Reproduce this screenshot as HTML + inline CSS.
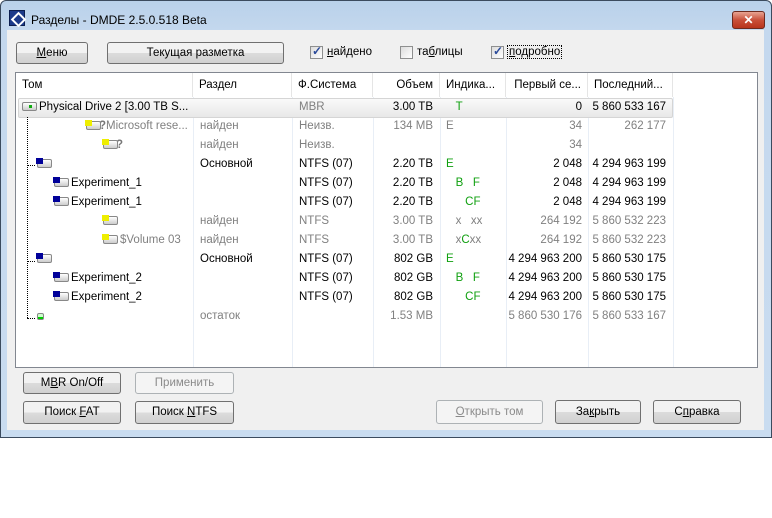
<!DOCTYPE html>
<html><head><meta charset="utf-8"><style>
*{margin:0;padding:0;box-sizing:border-box}
body{width:772px;height:518px;background:#fff;font-family:"Liberation Sans",sans-serif;font-size:11.5px;position:relative;overflow:hidden}
.win{position:absolute;left:0;top:0;width:772px;height:438px;background:linear-gradient(#b9d1ea,#c4d8ee 30px,#c9dcf0);border:1px solid #3b4b5e;border-radius:6px 6px 0 0}
.title{position:absolute;left:30px;top:12px;font-size:12px;color:#000}
.logo{position:absolute;left:8px;top:9px;width:16px;height:16px;background:#1c3a8a;border:1px solid #0c1e50}
.logo:after{content:"";position:absolute;left:3px;top:3px;width:7px;height:7px;border:2px solid #fff;transform:rotate(45deg)}
.close{position:absolute;left:731px;top:10px;width:33px;height:18px;border-radius:3px;background:linear-gradient(#e8a493,#c9503a 50%,#b8341c);border:1px solid #6d2a1e;color:#fff;font-weight:bold;text-align:center;font-size:12px;line-height:16px}
.client{position:absolute;left:7px;top:30px;width:757px;height:400px;background:#f0f0f0}
.a{position:absolute;white-space:nowrap}
.btn{position:absolute;border:1px solid #707070;border-radius:3px;background:linear-gradient(#f2f2f2 50%,#dcdcdc 50%,#d0d0d0);text-align:center;line-height:20px;color:#000}
.btn.dis{border-color:#adb2b5;background:#f4f4f4;color:#8a8a8a}
.cb{position:absolute;width:13px;height:13px;border:1px solid #8e8f8f;background:linear-gradient(135deg,#dcdcdc,#fff)}
.cb.on:after{content:"✓";position:absolute;left:1px;top:-3px;color:#2a4a9a;font-weight:bold;font-size:12px}
.list{position:absolute;left:15px;top:72px;width:743px;height:296px;background:#fff;border:1px solid #828790}
.hdr{position:absolute;top:0;height:24px;line-height:25px;border-right:1px solid #e5e5e5;padding:0 6px;color:#000;white-space:nowrap}
.vl{position:absolute;top:24px;bottom:0;width:1px;background:#e8eef6}
.t{position:absolute;height:19px;line-height:19px;white-space:nowrap}
.g{color:#808080}.gr{color:#10a010}
.r{text-align:right}
.ic{display:inline-block;width:15px;height:9px;border:1px solid #888;border-radius:2px;background:linear-gradient(#fff,#ccc);vertical-align:-1px;position:relative;margin-right:2px}
.ic i{position:absolute;left:-2px;top:-2px;width:7px;height:6px}
</style></head><body>
<div class="win">
<div class="logo"></div><div class="title">Разделы - DMDE 2.5.0.518 Beta</div>
<div class="close">✕</div>
</div>
<div class="client"></div>
<div class="btn" style="left:16px;top:42px;width:72px;height:22px"><u>М</u>еню</div>
<div class="btn" style="left:107px;top:42px;width:177px;height:22px">Текущая разметка</div>
<div class="cb on" style="left:310px;top:46px"></div><div class="a" style="left:327px;top:46px"><u>н</u>айдено</div>
<div class="cb" style="left:400px;top:46px"></div><div class="a" style="left:417px;top:46px">та<u>б</u>лицы</div>
<div class="cb on" style="left:491px;top:46px"></div><div class="a" style="left:507px;top:45px;border:1px dotted #000;padding:0 1px"><u>п</u>одробно</div>
<div class="list">
<div class="hdr" style="left:0;width:177px">Том</div>
<div class="hdr" style="left:177px;width:99px">Раздел</div>
<div class="hdr" style="left:276px;width:81px">Ф.Система</div>
<div class="hdr r" style="left:357px;width:67px">Объем</div>
<div class="hdr" style="left:424px;width:66px">Индика...</div>
<div class="hdr r" style="left:490px;width:82px">Первый се...</div>
<div class="hdr" style="left:572px;width:85px">Последний...</div>
<div class="vl" style="left:177px"></div><div class="vl" style="left:276px"></div><div class="vl" style="left:357px"></div><div class="vl" style="left:424px"></div><div class="vl" style="left:490px"></div><div class="vl" style="left:572px"></div><div class="vl" style="left:657px"></div>
<div style="position:absolute;left:2px;top:25px;width:655px;height:20px;border:1px solid #d5d5d5;border-radius:2px;background:linear-gradient(#fafafa,#e8e8e8)"></div>
<div style="position:absolute;left:11px;top:44px;height:201px;border-left:1px dotted #000"></div>
<div style="position:absolute;left:11px;top:92px;width:8px;border-top:1px dotted #000"></div>
<div style="position:absolute;left:11px;top:188px;width:8px;border-top:1px dotted #000"></div>
<div style="position:absolute;left:11px;top:245px;width:8px;border-top:1px dotted #000"></div>
</div>
<div id="rows"></div>
<script>
var rows=[
[22,'','Physical Drive 2 [3.00 TB S...','','MBR','3.00 TB','&nbsp;&nbsp;&nbsp;T','0','5 860 533 167','x',1],
[86,'#ee0','Microsoft rese...','найден','Неизв.','134 MB','E','34','262 177','q',0],
[103,'#ee0','','найден','Неизв.','','','34','','q',0],
[37,'#009','','Основной','NTFS (07)','2.20 TB','<span class=gr>E</span>','2 048','4 294 963 199','',1],
[54,'#009','Experiment_1','','NTFS (07)','2.20 TB','<span class=gr>&nbsp;&nbsp;&nbsp;B&nbsp;&nbsp;&nbsp;F</span>','2 048','4 294 963 199','',1],
[54,'#009','Experiment_1','','NTFS (07)','2.20 TB','<span class=gr>&nbsp;&nbsp;&nbsp;&nbsp;&nbsp;&nbsp;CF</span>','2 048','4 294 963 199','',1],
[103,'#ee0','','найден','NTFS','3.00 TB','&nbsp;&nbsp;&nbsp;x&nbsp;&nbsp;&nbsp;xx','264 192','5 860 532 223','',0],
[103,'#ee0','$Volume 03','найден','NTFS','3.00 TB','&nbsp;&nbsp;&nbsp;x<span class=gr>C</span>xx','264 192','5 860 532 223','',0],
[37,'#009','','Основной','NTFS (07)','802 GB','<span class=gr>E</span>','4 294 963 200','5 860 530 175','',1],
[54,'#009','Experiment_2','','NTFS (07)','802 GB','<span class=gr>&nbsp;&nbsp;&nbsp;B&nbsp;&nbsp;&nbsp;F</span>','4 294 963 200','5 860 530 175','',1],
[54,'#009','Experiment_2','','NTFS (07)','802 GB','<span class=gr>&nbsp;&nbsp;&nbsp;&nbsp;&nbsp;&nbsp;CF</span>','4 294 963 200','5 860 530 175','',1],
[37,'g','','остаток','','1.53 MB','','5 860 530 176','5 860 533 167','',0]];
var h='';
rows.forEach(function(r,i){var y=98+i*19;var c=r[10]?'':' g';
var ic;
if(r[9]=='x')ic='<span class=ic style="width:15px"><i style="left:6px;top:2px;width:3px;height:3px;background:#1a1"></i></span>';
else if(r[1]=='g')ic='<span class=ic style="width:7px;height:7px;background:#cfc"><i style="left:0;top:3px;width:5px;height:2px;background:#0c0"></i></span>';
else ic='<span class=ic><i style="background:'+r[1]+'"></i></span>'+(r[9]=='q'?'<b style="color:#777;margin-left:-4px">?</b>':'');
h+='<div class="t'+c+'" style="left:'+r[0]+'px;top:'+y+'px'+(i==0?';color:#000':'')+'">'+ic+r[2]+'</div>';
h+='<div class="t'+c+'" style="left:200px;top:'+y+'px">'+r[3]+'</div>';
h+='<div class="t'+(i==0?' g':c)+'" style="left:299px;top:'+y+'px">'+r[4]+'</div>';
h+='<div class="t r'+c+'" style="left:373px;width:60px;top:'+y+'px">'+r[5]+'</div>';
h+='<div class="t'+c+'" style="left:446px;top:'+y+'px">'+(i==0?'<span class=gr>'+r[6]+'</span>':r[6])+'</div>';
h+='<div class="t r'+c+'" style="left:500px;width:82px;top:'+y+'px">'+r[7]+'</div>';
h+='<div class="t r'+c+'" style="left:582px;width:84px;top:'+y+'px">'+r[8]+'</div>';
});
document.getElementById('rows').innerHTML=h;
</script>
<div class="btn" style="left:23px;top:372px;width:98px;height:22px">M<u>B</u>R On/Off</div>
<div class="btn dis" style="left:135px;top:372px;width:99px;height:22px">Применить</div>
<div class="btn" style="left:23px;top:401px;width:98px;height:23px">Поиск <u>F</u>AT</div>
<div class="btn" style="left:135px;top:401px;width:99px;height:23px">Поиск <u>N</u>TFS</div>
<div class="btn dis" style="left:436px;top:400px;width:107px;height:24px;line-height:22px"><u>О</u>ткрыть том</div>
<div class="btn" style="left:555px;top:400px;width:86px;height:24px;line-height:22px">За<u>к</u>рыть</div>
<div class="btn" style="left:653px;top:400px;width:88px;height:24px;line-height:22px">С<u>п</u>равка</div>
</body></html>
